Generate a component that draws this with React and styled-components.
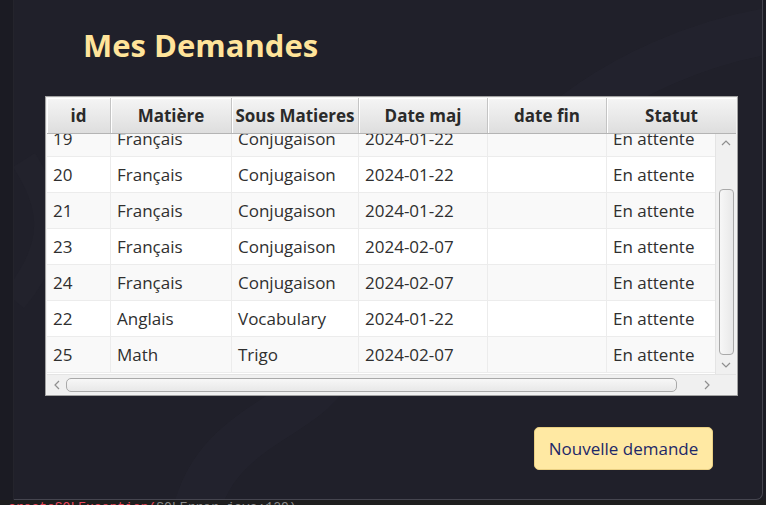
import React from 'react';
import styled, { createGlobalStyle } from 'styled-components';

const GlobalStyle = createGlobalStyle`
  html, body {
    margin: 0;
    padding: 0;
    background: #1c1c24;
  }
`;

const Screen = styled.div`
  width: 766px;
  height: 505px;
  display: grid;
  grid-template-rows: 500px 5px;
  overflow: hidden;
  background: #1c1c24;
  font-family: 'Open Sans', 'Noto Sans', sans-serif;
`;

const Desk = styled.div`
  display: grid;
  grid-template-columns: 14px 749px 3px;
`;

const LeftStrip = styled.div`
  background: #1b1b23;
  border-right: 1px solid #24242c;
`;

const Window = styled.div`
  position: relative;
  background: #20202a;
  border-right: 1px solid #45454f;
  border-bottom: 1px solid #45454f;
  border-radius: 0 0 7px 0;
  overflow: hidden;
  display: flex;
  flex-direction: column;
  padding-left: 31px;
`;

const Swirl = styled.svg`
  position: absolute;
  inset: 0;
  pointer-events: none;
`;

const Title = styled.h1`
  position: relative;
  margin: 25px 0 0 38px;
  height: 40px;
  line-height: 40px;
  font-size: 31px;
  font-weight: 700;
  color: #ffe49a;
`;

const Table = styled.div`
  position: relative;
  margin-top: 31px;
  width: 689px;
  height: 297px;
  border: 1px solid #a2a2a2;
  background: #f2f2f2;
  padding: 1px 1px 0 1px;
  display: grid;
  grid-template-rows: 36px 240px 20px;
`;

const COLS = '64px 121px 127px 129px 119px 1fr';

const HeaderRow = styled.div`
  display: grid;
  grid-template-columns: ${COLS};
  border-bottom: 1px solid #b4b4b4;
`;

const HeaderCell = styled.div`
  display: flex;
  align-items: center;
  justify-content: center;
  background: linear-gradient(#f5f5f5, #dedede);
  border-right: 1px solid #c4c4c4;
  box-shadow: inset 1px 1px 0 #ffffff;
  font-size: 17px;
  font-weight: 700;
  color: #2a2a2a;
  white-space: nowrap;
  overflow: hidden;

  &:last-child {
    border-right: none;
  }
`;

const BodyArea = styled.div`
  display: grid;
  grid-template-columns: 1fr 21px;
  overflow: hidden;
`;

const Rows = styled.div`
  overflow: hidden;
  background: #ffffff;
`;

const RowsInner = styled.div`
  margin-top: -13px;
`;

const Row = styled.div`
  display: grid;
  grid-template-columns: ${COLS};
  height: 36px;
  background: ${p => (p.$shade ? '#f9f9f9' : '#ffffff')};
`;

const Cell = styled.div`
  display: flex;
  align-items: center;
  padding-left: 6px;
  border-right: 1px solid #ececec;
  border-bottom: 1px solid #ececec;
  font-size: 17px;
  color: #2f2f2f;
  white-space: nowrap;
  overflow: hidden;

  &:last-child {
    border-right: none;
  }
`;

const VScroll = styled.div`
  display: grid;
  grid-template-rows: 18px 1fr 18px;
  background: #f0f0f0;
  border-left: 1px solid #e4e4e4;
  justify-items: center;
  align-items: center;
`;

const VThumb = styled.div`
  width: 13px;
  height: 164px;
  align-self: start;
  margin-top: 37px;
  border: 1px solid #a9a9a9;
  border-radius: 4px;
  background: linear-gradient(90deg, #f7f7f7, #e8e8e8);
`;

const HScroll = styled.div`
  display: grid;
  grid-template-columns: 19px 1fr 38px 21px;
  align-items: center;
  background: #f0f0f0;
  border-top: 1px solid #e4e4e4;
`;

const HThumb = styled.div`
  height: 12px;
  border: 1px solid #a9a9a9;
  border-radius: 5px;
  background: linear-gradient(#f7f7f7, #e8e8e8);
`;

const Corner = styled.div`
  align-self: stretch;
  background: #f0f0f0;
`;

const Arrow = styled.svg`
  display: block;
  justify-self: ${p => p.$end ? 'end' : 'center'};
  margin-right: ${p => p.$end ? '4px' : '0'};
`;

const Footer = styled.div`
  position: relative;
  display: flex;
  justify-content: flex-end;
  width: 668px;
  margin-top: 31px;
`;

const Button = styled.button`
  height: 43px;
  width: 179px;
  border: 1px solid #e9cf82;
  border-radius: 5px;
  background: #ffe9a3;
  color: #1d2868;
  font-family: 'Open Sans', 'Noto Sans', sans-serif;
  font-size: 17px;
  padding: 0;
`;

const Console = styled.div`
  overflow: hidden;
  height: 5px;
  padding-left: 8px;
  font-family: 'Liberation Mono', monospace;
  font-size: 13px;
  line-height: 13px;
  white-space: nowrap;
  background: #1e1e1e;
`;

const ConsoleLine = styled.div`
  margin-top: 1px;
`;

const Red = styled.span`
  color: #e8475c;
`;

const Gray = styled.span`
  color: #8a8a8a;
`;

const rows = [
  ['19', 'Français', 'Conjugaison', '2024-01-22', '', 'En attente'],
  ['20', 'Français', 'Conjugaison', '2024-01-22', '', 'En attente'],
  ['21', 'Français', 'Conjugaison', '2024-01-22', '', 'En attente'],
  ['23', 'Français', 'Conjugaison', '2024-02-07', '', 'En attente'],
  ['24', 'Français', 'Conjugaison', '2024-02-07', '', 'En attente'],
  ['22', 'Anglais', 'Vocabulary', '2024-01-22', '', 'En attente'],
  ['25', 'Math', 'Trigo', '2024-02-07', '', 'En attente'],
];

const headers = ['id', 'Matière', 'Sous Matieres', 'Date maj', 'date fin', 'Statut'];

const Chevron = ({ dir, end }) => {
  const paths = {
    up: 'M1 6 L5 2 L9 6',
    down: 'M1 2 L5 6 L9 2',
    left: 'M6 1 L2 5 L6 9',
    right: 'M2 1 L6 5 L2 9',
  };
  const horiz = dir === 'left' || dir === 'right';
  return (
    <Arrow $end={end} width={horiz ? 8 : 10} height={horiz ? 10 : 8} viewBox={horiz ? '0 0 8 10' : '0 0 10 8'}>
      <path d={paths[dir]} fill="none" stroke="#8e8e8e" strokeWidth="1.2" />
    </Arrow>
  );
};

export default function App() {
  return (
    <>
      <GlobalStyle />
      <Screen>
        <Desk>
          <LeftStrip />
          <Window>
            <Swirl width="749" height="500" viewBox="0 0 749 500">
              <path d="M180 520 C200 420 300 420 320 360 C340 300 420 250 520 150 C600 70 700 40 760 30"
                fill="none" stroke="#252530" strokeWidth="46" opacity="0.6" />
              <path d="M0 300 C50 240 35 200 10 160" fill="none" stroke="#22222c" strokeWidth="26" />
            </Swirl>
            <Title>Mes Demandes</Title>
            <Table>
              <HeaderRow>
                {headers.map(h => (
                  <HeaderCell key={h}>{h}</HeaderCell>
                ))}
              </HeaderRow>
              <BodyArea>
                <Rows>
                  <RowsInner>
                    {rows.map((r, i) => (
                      <Row key={r[0]} $shade={i % 2 === 0}>
                        {r.map((c, j) => (
                          <Cell key={j}>{c}</Cell>
                        ))}
                      </Row>
                    ))}
                  </RowsInner>
                </Rows>
                <VScroll>
                  <Chevron dir="up" />
                  <VThumb />
                  <Chevron dir="down" />
                </VScroll>
              </BodyArea>
              <HScroll>
                <Chevron dir="left" />
                <HThumb />
                <Chevron dir="right" end />
                <Corner />
              </HScroll>
            </Table>
            <Footer>
              <Button>Nouvelle demande</Button>
            </Footer>
          </Window>
          <div />
        </Desk>
        <Console>
          <ConsoleLine>
            <Red>createSQLException(</Red>
            <Gray>SQLError.java:129)</Gray>
          </ConsoleLine>
        </Console>
      </Screen>
    </>
  );
}
